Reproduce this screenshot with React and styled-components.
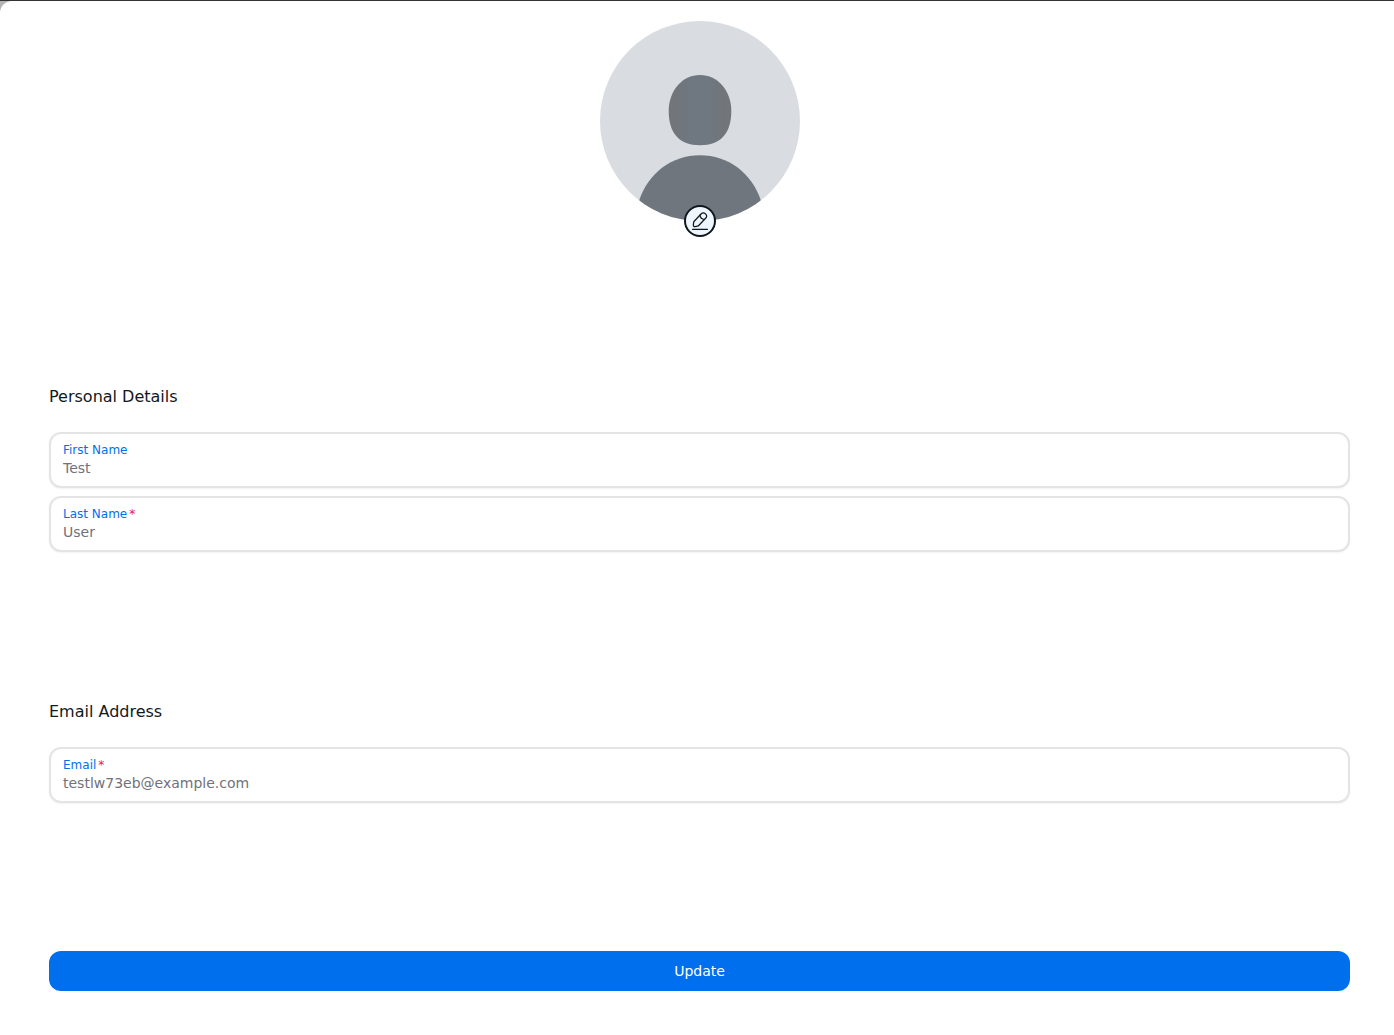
import React, { useId, useState } from "react";
import styled, { createGlobalStyle } from "styled-components";

const GlobalStyle = createGlobalStyle`
  *, *::before, *::after { box-sizing: border-box; }
  body {
    margin: 0;
    color: #11181c;
    background: #ffffff;
    font: 14px/20px "DejaVu Sans", Verdana, sans-serif;
  }
`;

const Frame = styled.div`
  min-height: 100vh;
  display: flex;
  border-top: 1px solid #333333;
  background: #b4b4b4;
`;

const Panel = styled.main`
  flex: 1;
  min-width: 0;
  padding: 20px 44px 43px 49px;
  border-top-left-radius: 12px;
  background: #ffffff;
`;

const Form = styled.form`
  display: flex;
  flex-direction: column;
`;

const AvatarBox = styled.div`
  position: relative;
  align-self: center;
  width: 200px;
  height: 200px;
  margin-bottom: 164px;
`;

const AvatarPicture = styled.svg`
  display: block;
  width: 100%;
  height: 100%;
  border-radius: 50%;
`;

const EditButton = styled.button`
  position: absolute;
  left: 50%;
  bottom: 0;
  transform: translate(-50%, 50%);
  display: grid;
  place-items: center;
  width: 32px;
  height: 32px;
  padding: 0;
  border: 2px solid #11181c;
  border-radius: 50%;
  color: #11181c;
  background: #f0f6ff;
  cursor: pointer;
`;

const Section = styled.section`
  display: flex;
  flex-direction: column;
  gap: 23px;
  margin-bottom: 148px;
`;

const SectionTitle = styled.h2`
  margin: 0;
  font-size: 16px;
  font-weight: 400;
  line-height: 24px;
`;

const FieldList = styled.div`
  display: flex;
  flex-direction: column;
  gap: 8px;
`;

const FieldBox = styled.div`
  display: flex;
  flex-direction: column;
  padding: 8px 12px;
  border: 2px solid #e4e4e4;
  border-radius: 12px;
  background: #ffffff;
  box-shadow: 0 1px 2px rgba(0, 0, 0, 0.05);

  &:focus-within { border-color: #006fee; }
`;

const Label = styled.label`
  color: #006fee;
  font-size: 12px;
  line-height: 16px;
`;

const Required = styled.span`
  margin-left: 2px;
  color: #f31260;
`;

const Input = styled.input`
  width: 100%;
  height: 20px;
  padding: 0;
  border: 0;
  outline: 0;
  color: #71717a;
  background: transparent;
  font: inherit;
`;

const SubmitButton = styled.button`
  height: 40px;
  padding: 0 16px;
  border: 0;
  border-radius: 12px;
  color: #ffffff;
  background: #006fee;
  font: inherit;
  cursor: pointer;
`;

function Field({ label, type = "text", value, required }) {
  const id = useId();
  const [text, setText] = useState(value);
  return (
    <FieldBox>
      <Label htmlFor={id}>
        {label}
        {required && <Required aria-hidden="true">*</Required>}
      </Label>
      <Input
        id={id}
        type={type}
        required={required}
        value={text}
        onChange={(event) => setText(event.target.value)}
      />
    </FieldBox>
  );
}

function Avatar() {
  return (
    <AvatarBox>
      <AvatarPicture viewBox="0 0 200 200" aria-hidden="true">
        <defs>
          <linearGradient id="figure-tone" gradientUnits="userSpaceOnUse" x1="68" y1="0" x2="132" y2="0">
            <stop offset="0" stopColor="#737578" />
            <stop offset="0.35" stopColor="#6f7780" />
            <stop offset="0.65" stopColor="#6f7780" />
            <stop offset="1" stopColor="#737578" />
          </linearGradient>
        </defs>
        <rect width="200" height="200" fill="#d9dce1" />
        <path
          d="M100 54C118 54 131.300 70 131.300 90C131.300 112 121 124.200 100 124.200C79 124.200 68.700 112 68.700 90C68.700 70 82 54 100 54Z"
          fill="url(#figure-tone)"
        />
        <path d="M39 180C48 152 72 134.300 100 134.300C128 134.300 152 152 161 180V200H39Z" fill="#70767d" />
      </AvatarPicture>
      <EditButton type="button" aria-label="Edit picture">
        <svg width="20" height="20" viewBox="0 0 24 24" fill="none" stroke="currentColor" strokeWidth="1.5" strokeLinecap="round" strokeLinejoin="round">
          <path d="M13.26 3.6L5.05 12.29C4.74 12.62 4.44 13.27 4.38 13.72L4.01 16.96C3.88 18.13 4.72 18.93 5.88 18.73L9.1 18.18C9.55 18.1 10.18 17.77 10.49 17.43L18.7 8.74C20.12 7.24 20.76 5.53 18.55 3.44C16.35 1.37 14.68 2.1 13.26 3.6Z" />
          <path d="M11.89 5.05C12.32 7.81 14.55 9.92 17.33 10.2" />
          <path d="M3 22H21" />
        </svg>
      </EditButton>
    </AvatarBox>
  );
}

export default function App() {
  return (
    <>
      <GlobalStyle />
      <Frame>
        <Panel>
          <Form onSubmit={(event) => event.preventDefault()}>
            <Avatar />
            <Section>
              <SectionTitle>Personal Details</SectionTitle>
              <FieldList>
                <Field label="First Name" value="Test" />
                <Field label="Last Name" value="User" required />
              </FieldList>
            </Section>
            <Section>
              <SectionTitle>Email Address</SectionTitle>
              <FieldList>
                <Field label="Email" type="email" value="testlw73eb@example.com" required />
              </FieldList>
            </Section>
            <SubmitButton type="submit">Update</SubmitButton>
          </Form>
        </Panel>
      </Frame>
    </>
  );
}
